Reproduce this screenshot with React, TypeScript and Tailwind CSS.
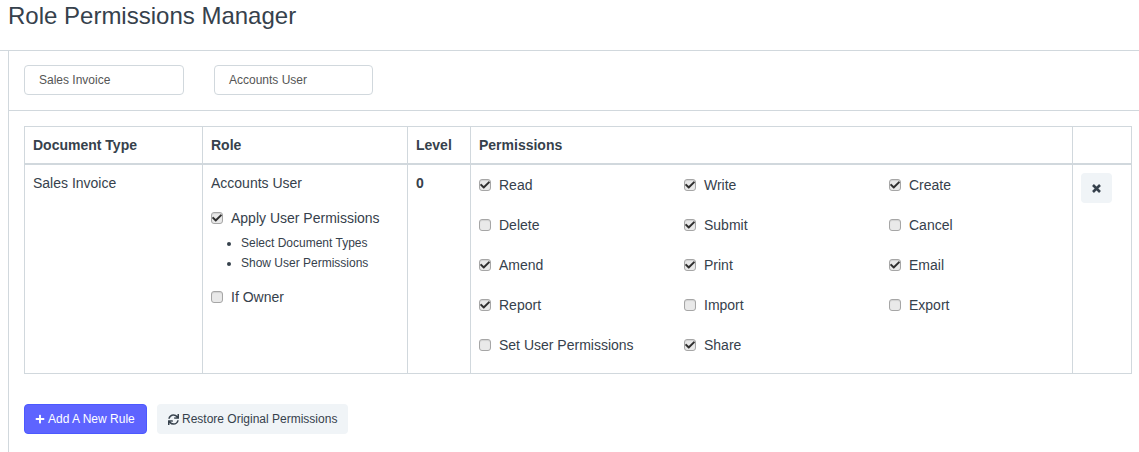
import { FaCheck, FaPlus, FaSync } from "react-icons/fa";

const PERMISSIONS = [
  ["Read", true],
  ["Write", true],
  ["Create", true],
  ["Delete", false],
  ["Submit", true],
  ["Cancel", false],
  ["Amend", true],
  ["Print", true],
  ["Email", true],
  ["Report", true],
  ["Import", false],
  ["Export", false],
  ["Set User Permissions", false],
  ["Share", true],
] as const;

function Checkbox({ checked }: { checked: boolean }) {
  return (
    <span className="flex w-3 h-3 shrink-0 items-center justify-center rounded-[3px] border border-[#a6a6a6] bg-[#e9e9e9] shadow-[inset_0_1px_1px_rgba(0,0,0,0.1)]">
      {checked && <FaCheck className="text-[#2f2f2f]" size={10} />}
    </span>
  );
}

function FilterBox({ label, width }: { label: string; width: string }) {
  return (
    <div className={`${width} h-[30px] px-[14px] flex items-center rounded-[4px] border border-[#d1d8dd] text-xs text-[#555]`}>
      {label}
    </div>
  );
}

export default function App() {
  return (
    <div className="w-[1139px] h-[452px] overflow-hidden bg-white text-sm text-[#36414c] font-['Liberation_Sans',Arial,sans-serif]">
      {/* Page title */}
      <div className="h-[51px] pl-2 border-b border-[#d1d8dd]">
        <h1 className="text-2xl leading-[32px] text-[#36414c]">Role Permissions Manager</h1>
      </div>

      <div className="ml-2 h-[401px] border-l border-[#d1d8dd]">
        {/* Filters */}
        <div className="h-[60px] pl-[15px] pt-[14px] flex gap-[30px] border-b border-[#d1d8dd]">
          <FilterBox label="Sales Invoice" width="w-[160px]" />
          <FilterBox label="Accounts User" width="w-[159px]" />
        </div>

        {/* Rules table */}
        <div className="ml-[15px] mt-[15px] w-[1108px] h-[248px] border border-[#d1d8dd] flex flex-col">
          <div className="flex h-[38px] shrink-0 border-b-2 border-[#d1d8dd] font-bold">
            <div className="w-[178px] px-2 flex items-center border-r border-[#d1d8dd]">Document Type</div>
            <div className="w-[205px] px-2 flex items-center border-r border-[#d1d8dd]">Role</div>
            <div className="w-[63px] px-2 flex items-center border-r border-[#d1d8dd]">Level</div>
            <div className="w-[602px] px-2 flex items-center border-r border-[#d1d8dd]">Permissions</div>
            <div className="flex-1" />
          </div>
          <div className="flex h-[208px]">
            <div className="w-[178px] px-2 pt-2 leading-5 border-r border-[#d1d8dd]">Sales Invoice</div>
            <div className="w-[205px] px-2 pt-2 border-r border-[#d1d8dd]">
              <div className="leading-5">Accounts User</div>
              <div className="mt-[15px] flex items-center gap-2 leading-5">
                <Checkbox checked />
                <span>Apply User Permissions</span>
              </div>
              <ul className="mt-[5px] pl-[30px] list-disc text-xs leading-5 marker:text-[#36414c]">
                <li>Select Document Types</li>
                <li>Show User Permissions</li>
              </ul>
              <div className="mt-[14px] flex items-center gap-2 leading-5">
                <Checkbox checked={false} />
                <span>If Owner</span>
              </div>
            </div>
            <div className="w-[63px] px-2 pt-2 leading-5 font-bold border-r border-[#d1d8dd]">0</div>
            <div className="w-[602px] pl-2 pt-[10px] border-r border-[#d1d8dd] grid grid-cols-[205px_205px_1fr] auto-rows-[40px] content-start">
              {PERMISSIONS.map(([name, checked]) => (
                <div key={name} className="flex items-start gap-2 leading-5">
                  <span className="mt-1"><Checkbox checked={checked} /></span>
                  <span>{name}</span>
                </div>
              ))}
            </div>
            <div className="flex-1 pl-2 pt-2">
              <button className="w-[31px] h-[30px] flex items-center justify-center rounded-[4px] bg-[#f0f4f7] text-[#36414c]">
                <svg width="9" height="9" viewBox="0 0 9 9" fill="none" stroke="currentColor" strokeWidth="2.6">
                  <path d="M1 1L8 8M8 1L1 8" />
                </svg>
              </button>
            </div>
          </div>
        </div>

        {/* Actions */}
        <div className="ml-[15px] mt-[30px] flex gap-[10px]">
          <button className="h-[30px] w-[123px] pl-[10px] flex items-center gap-[3px] rounded-[4px] border border-[#4c59ff] bg-[#5e64ff] text-xs text-white">
            <FaPlus size={10} />
            Add A New Rule
          </button>
          <button className="h-[30px] w-[191px] pl-[11px] flex items-center gap-[3px] rounded-[4px] bg-[#f0f4f7] text-xs text-[#36414c]">
            <FaSync size={11} />
            Restore Original Permissions
          </button>
        </div>
      </div>
    </div>
  );
}
